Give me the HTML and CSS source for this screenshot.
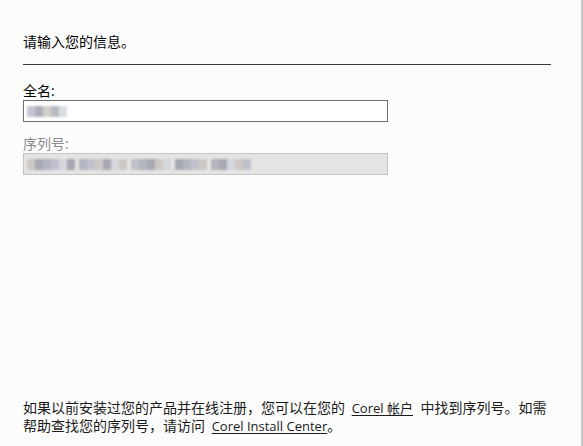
FILE: index.html
```html
<!DOCTYPE html>
<html lang="zh-CN">
<head>
<meta charset="utf-8">
<title>请输入您的信息</title>
<link rel="stylesheet" href="styles.css">
</head>
<body>
<div class="page">
  <div class="title">请输入您的信息。</div>
  <div class="rule"></div>
  <div class="field">
    <div class="label">全名:</div>
    <div class="box">
      <span class="blur">
        <i class="b1"></i><i class="b2"></i><i class="b3"></i><i class="b4"></i><i class="b5"></i>
      </span>
    </div>
  </div>
  <div class="field second">
    <div class="label dim">序列号:</div>
    <div class="box disabled">
      <span class="blur long">
        <i class="b3"></i><i class="b2"></i><i class="b4"></i><i class="b1"></i><i class="b5"></i><i class="b2"></i><i class="gap"></i>
        <i class="b4"></i><i class="b1"></i><i class="b3"></i><i class="b2"></i><i class="b5"></i><i class="b3"></i><i class="gap"></i>
        <i class="b1"></i><i class="b4"></i><i class="b2"></i><i class="b3"></i><i class="b5"></i><i class="gap"></i>
        <i class="b2"></i><i class="b4"></i><i class="b1"></i><i class="b3"></i><i class="gap"></i>
        <i class="b4"></i><i class="b2"></i><i class="b5"></i><i class="b3"></i><i class="b1"></i>
      </span>
    </div>
  </div>
  <div class="footer">
    如果以前安装过您的产品并在线注册，您可以在您的 <a class="link spaced" href="#">Corel 帐户</a> 中找到序列号。如需帮助查找您的序列号，请访问 <a class="link" href="#">Corel Install Center</a>。
  </div>
</div>
</body>
</html>
```
FILE: styles.css
```css
html, body {
  margin: 0;
  padding: 0;
}
body {
  background: #fcfcfc;
  font-family: "Open Sans", "Noto Sans CJK SC", sans-serif;
  font-size: 14px;
  color: #000;
}
.page {
  box-sizing: border-box;
  height: 446px;
  width: 583px;
  display: flex;
  flex-direction: column;
  padding: 33px 30px 11px 23px;
  border-right: 2px solid #c6c6c6;
}
.title {
  line-height: 18px;
}
.rule {
  height: 1px;
  background: #3a3a3a;
  margin-top: 13px;
}
.field {
  margin-top: 17px;
  display: flex;
  flex-direction: column;
}
.field.second {
  margin-top: 13px;
}
.label {
  line-height: 18px;
}
.label.dim {
  color: #8c8c8c;
}
.box {
  box-sizing: border-box;
  width: 365px;
  height: 22px;
  border: 1px solid #6f6f6f;
  background: #fff;
  display: flex;
  align-items: center;
  padding-left: 3px;
}
.box.disabled {
  border-color: #c4c4c4;
  background: #e4e4e4;
}
.blur {
  display: flex;
  height: 11px;
  filter: blur(1px);
  opacity: 0.8;
}
.blur i {
  display: block;
  width: 8px;
  height: 11px;
}
.blur .b1 { background: #b8b8c8; }
.blur .b2 { background: #9a9aa8; }
.blur .b3 { background: #c9c2bd; }
.blur .b4 { background: #a6a9b6; }
.blur .b5 { background: #d2d4dc; }
.blur .gap { width: 4px; background: transparent; }
.footer {
  margin-top: auto;
  line-height: 18px;
  color: #1a1a1a;
}
.link {
  color: #1a1a1a;
  text-decoration: underline;
  text-underline-offset: 2px;
  padding-left: 3px;
  font-size: 13px;
}
.link.spaced {
  margin-right: 4px;
}
```
